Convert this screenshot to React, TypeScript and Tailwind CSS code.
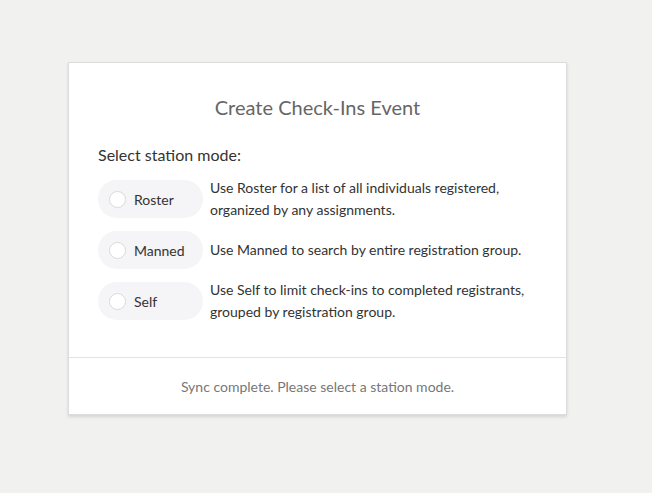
import React from "react";

const modes = [
  {
    name: "Roster",
    desc: "Use Roster for a list of all individuals registered, organized by any assignments.",
  },
  {
    name: "Manned",
    desc: "Use Manned to search by entire registration group.",
  },
  {
    name: "Self",
    desc: "Use Self to limit check-ins to completed registrants, grouped by registration group.",
  },
];

export default function App() {
  return (
    <div
      className="min-h-[493px] w-full bg-[#f1f1f0] pt-[62px]"
      style={{ fontFamily: "Lato, 'Open Sans', sans-serif" }}
    >
      <div className="ml-[68px] w-[499px] border border-[#dcdcdc] bg-white shadow-[0_2px_3px_rgba(0,0,0,0.12)]">
        <div className="px-[29px] pt-[30px] pb-[34px]">
          <h1 className="text-center text-[20px] leading-[28px] text-[#666666]">
            Create Check-Ins Event
          </h1>
          <div className="mt-[22px] text-[16px] leading-[24px] text-[#333333]">
            Select station mode:
          </div>
          <div className="mt-[10px] flex flex-col gap-[10px]">
            {modes.map((m) => (
              <div key={m.name} className="flex items-center">
                <label className="flex h-[38px] w-[105px] shrink-0 cursor-pointer items-center rounded-full bg-[#f5f4f6] pl-[11px]">
                  <span className="h-[17px] w-[17px] rounded-full border border-[#dadada] bg-white" />
                  <span className="ml-[8px] text-[14px] text-[#333333]">{m.name}</span>
                </label>
                <p className="ml-[7px] text-[14px] leading-[22px] text-[#333333]">{m.desc}</p>
              </div>
            ))}
          </div>
        </div>
        <div className="flex h-[57px] items-center justify-center border-t border-[#e3e3e3] text-[14px] text-[#777777]">
          Sync complete. Please select a station mode.
        </div>
      </div>
    </div>
  );
}
